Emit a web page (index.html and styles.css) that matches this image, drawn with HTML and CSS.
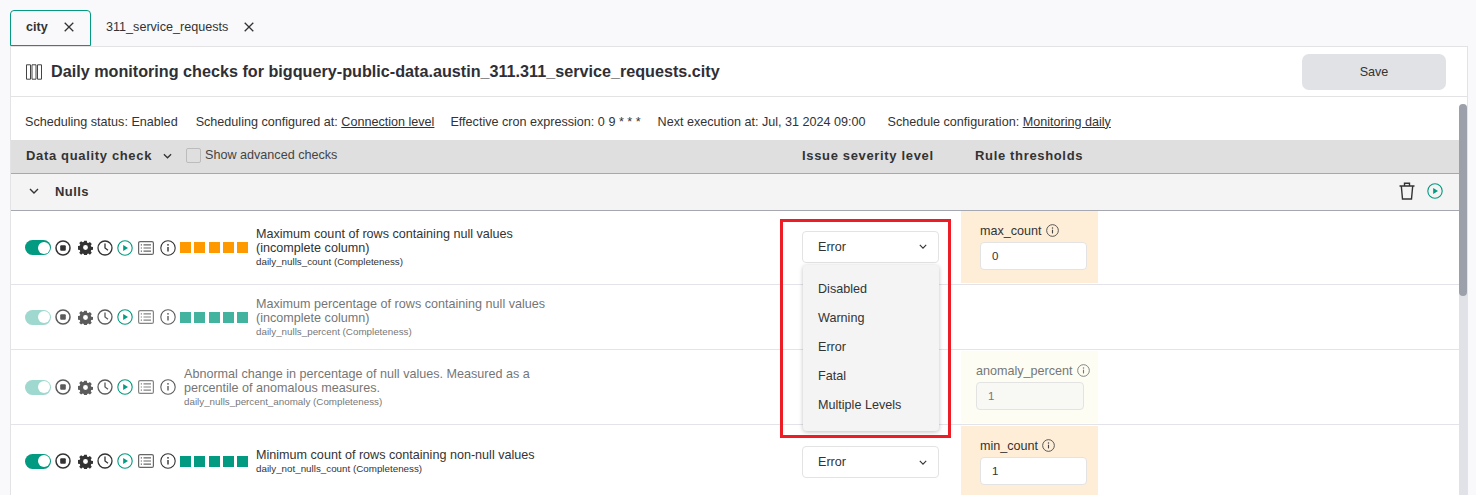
FILE: index.html
```html
<!DOCTYPE html>
<html lang="en">
<head>
<meta charset="utf-8">
<title>Daily monitoring checks</title>
<link rel="stylesheet" href="styles.css">
</head>
<body>
<svg class="defs" width="0" height="0" aria-hidden="true">
  <symbol id="stop" viewBox="0 0 16 16"><circle cx="8" cy="8" r="7" fill="none" stroke="currentColor" stroke-width="1.5"/><rect x="5.2" y="5.2" width="5.6" height="5.6" rx="1" fill="currentColor"/></symbol>
  <symbol id="gear" viewBox="0 0 16 16"><path fill="currentColor" fill-rule="evenodd" d="M6.6.8h2.8l.4 2 1.2.5 1.7-1.1 2 2-1.1 1.7.5 1.2 2 .4v2.8l-2 .4-.5 1.2 1.1 1.7-2 2-1.7-1.1-1.2.5-.4 2H6.6l-.4-2-1.2-.5-1.7 1.1-2-2 1.1-1.7-.5-1.2-2-.4V6.5l2-.4.5-1.2-1.100-1.700 2-2L5 2.300l1.200-.5zM8 5.400a2.600 2.600 0 1 0 0 5.200 2.600 2.600 0 0 0 0-5.200z"/></symbol>
  <symbol id="clock" viewBox="0 0 16 16"><circle cx="8" cy="8" r="7" fill="none" stroke="currentColor" stroke-width="1.300"/><path d="M8 3.600V8l3 2.200" fill="none" stroke="currentColor" stroke-width="1.300"/></symbol>
  <symbol id="play" viewBox="0 0 16 16"><circle cx="8" cy="8" r="7.200" fill="none" stroke="#029a80" stroke-width="1.100"/><path d="M6.200 4.900v6.200L11 8z" fill="#029a80"/></symbol>
  <symbol id="list" viewBox="0 0 16 16"><rect x=".6" y="1.600" width="14.800" height="12.800" rx="1.500" fill="none" stroke="currentColor" stroke-width="1.200"/><path d="M5.500 4.800h7.500M5.500 8h7.500M5.500 11.200h7.500M2.800 4.800h1.200M2.800 8h1.200M2.800 11.200h1.200" stroke="currentColor" stroke-width="1.200"/></symbol>
  <symbol id="info" viewBox="0 0 16 16"><circle cx="8" cy="8" r="7.200" fill="none" stroke="currentColor" stroke-width="1.100"/><path d="M8 7v4.600" stroke="currentColor" stroke-width="1.400"/><circle cx="8" cy="4.800" r=".9" fill="currentColor"/></symbol>
  <symbol id="chev" viewBox="0 0 10 6"><path d="M1 1l4 4 4-4" fill="none" stroke="currentColor" stroke-width="1.400"/></symbol>
  <symbol id="close" viewBox="0 0 10 10"><path d="M.7.7l8.600 8.600M9.300.7L.7 9.300" fill="none" stroke="currentColor" stroke-width="1.300"/></symbol>
  <symbol id="trash" viewBox="0 0 16 18"><path d="M.5 4h15M5.500 4V1.200h5V4M2.300 4l1.200 13h9l1.200-13" fill="none" stroke="currentColor" stroke-width="1.400"/></symbol>
  <symbol id="cols" viewBox="0 0 16 16"><path d="M.5.800h4v14.400h-4zM6 .8h4v14.400H6zM11.500.8h4v14.400h-4z" fill="none" stroke="currentColor" stroke-width="1"/></symbol>
</svg>

<div class="tabs">
  <div class="tab active"><span class="tab-label">city</span><svg class="x"><use href="#close"/></svg></div>
  <div class="tab"><span>311_service_requests</span><svg class="x"><use href="#close"/></svg></div>
</div>

<main class="panel">
  <header class="titlebar">
    <div class="title"><svg class="cols"><use href="#cols"/></svg><h1>Daily monitoring checks for bigquery-public-data.austin_311.311_service_requests.city</h1></div>
    <button class="save">Save</button>
  </header>

  <section class="status">
    <span>Scheduling status: Enabled</span>
    <span>Scheduling configured at: <u>Connection level</u></span>
    <span>Effective cron expression: 0 9 * * *</span>
    <span>Next execution at: Jul, 31 2024 09:00</span>
    <span class="status-last">Schedule configuration: <u>Monitoring daily</u></span>
  </section>

  <div class="thead">
    <div class="col-check"><b>Data quality check</b><svg class="chev head-chev"><use href="#chev"/></svg><span class="checkbox"></span><span class="adv">Show advanced checks</span></div>
    <div class="col-sev"><b>Issue severity level</b></div>
    <div class="col-thr"><b>Rule thresholds</b></div>
  </div>

  <div class="group">
    <svg class="chev group-chev"><use href="#chev"/></svg><b>Nulls</b>
    <span class="group-actions"><svg class="trash"><use href="#trash"/></svg><svg class="ic group-play"><use href="#play"/></svg></span>
  </div>

  <div class="row r1">
    <div class="col-check">
      <div class="icons"><span class="toggle"></span><svg class="ic"><use href="#stop"/></svg><svg class="ic gear"><use href="#gear"/></svg><svg class="ic"><use href="#clock"/></svg><svg class="ic"><use href="#play"/></svg><svg class="ic lst"><use href="#list"/></svg><svg class="ic inf"><use href="#info"/></svg></div>
      <div class="squares orange"><i></i><i></i><i></i><i></i><i></i></div>
      <div class="desc"><p>Maximum count of rows containing null values<br>(incomplete column)</p><small>daily_nulls_count (Completeness)</small></div>
    </div>
    <div class="col-sev"><div class="select"><span>Error</span><svg class="chev"><use href="#chev"/></svg></div></div>
    <div class="col-thr"><div class="thr"><label>max_count <svg class="ic-s"><use href="#info"/></svg></label><div class="input">0</div></div></div>
  </div>

  <div class="row r2 off">
    <div class="col-check">
      <div class="icons"><span class="toggle"></span><svg class="ic"><use href="#stop"/></svg><svg class="ic gear"><use href="#gear"/></svg><svg class="ic"><use href="#clock"/></svg><svg class="ic"><use href="#play"/></svg><svg class="ic lst"><use href="#list"/></svg><svg class="ic inf"><use href="#info"/></svg></div>
      <div class="squares"><i></i><i></i><i></i><i></i><i></i></div>
      <div class="desc"><p>Maximum percentage of rows containing null values<br>(incomplete column)</p><small>daily_nulls_percent (Completeness)</small></div>
    </div>
    <div class="col-sev"></div>
    <div class="col-thr"></div>
  </div>

  <div class="row r3 off">
    <div class="col-check">
      <div class="icons"><span class="toggle"></span><svg class="ic"><use href="#stop"/></svg><svg class="ic gear"><use href="#gear"/></svg><svg class="ic"><use href="#clock"/></svg><svg class="ic"><use href="#play"/></svg><svg class="ic lst"><use href="#list"/></svg><svg class="ic inf"><use href="#info"/></svg></div>
      <div class="desc"><p>Abnormal change in percentage of null values. Measured as a<br>percentile of anomalous measures.</p><small>daily_nulls_percent_anomaly (Completeness)</small></div>
    </div>
    <div class="col-sev"></div>
    <div class="col-thr"><div class="thr thr-off"><label>anomaly_percent <svg class="ic-s"><use href="#info"/></svg></label><div class="input">1</div></div></div>
  </div>

  <div class="row r4">
    <div class="col-check">
      <div class="icons"><span class="toggle"></span><svg class="ic"><use href="#stop"/></svg><svg class="ic gear"><use href="#gear"/></svg><svg class="ic"><use href="#clock"/></svg><svg class="ic"><use href="#play"/></svg><svg class="ic lst"><use href="#list"/></svg><svg class="ic inf"><use href="#info"/></svg></div>
      <div class="squares"><i></i><i></i><i></i><i></i><i></i></div>
      <div class="desc"><p>Minimum count of rows containing non-null values</p><small>daily_not_nulls_count (Completeness)</small></div>
    </div>
    <div class="col-sev"><div class="select"><span>Error</span><svg class="chev"><use href="#chev"/></svg></div></div>
    <div class="col-thr"><div class="thr"><label>min_count <svg class="ic-s"><use href="#info"/></svg></label><div class="input">1</div></div></div>
  </div>

  <div class="scrollbar"></div>
</main>

<ul class="menu">
  <li>Disabled</li><li>Warning</li><li>Error</li><li>Fatal</li><li>Multiple Levels</li>
</ul>
<div class="redbox"></div>
</body>
</html>
```
FILE: styles.css
```css
* { box-sizing: border-box; }
html, body { height: 100%; }
body {
  margin: 0;
  padding: 10px 8px 0 10px;
  height: 495px;
  overflow: hidden;
  position: relative;
  background: #f9f9fb;
  font-family: "Liberation Sans", Arial, sans-serif;
  font-size: 12.6px;
  color: #333;
}
.defs { position: absolute; }
b { font-weight: 700; }

.tabs { display: flex; height: 36px; }
.tab {
  display: flex;
  align-items: center;
  height: 36px;
  padding: 0 15px 2px 15px;
  gap: 16px;
  color: #333;
}
.tab.active {
  width: 81px;
  border: 1px solid #029a80;
  border-radius: 4px 4px 0 0;
  font-weight: 700;
  gap: 16px;
}
.x { width: 10px; height: 10px; color: #333; }

.panel {
  position: relative;
  height: 449px;
  background: #fff;
  border: 1px solid #e3e3e6;
  border-bottom: 0;
  overflow: hidden;
}

.titlebar {
  display: flex;
  align-items: center;
  justify-content: space-between;
  height: 50px;
  padding: 0 21px 0 15px;
  border-bottom: 1px solid #e3e3e6;
}
.title { display: flex; align-items: center; gap: 9px; }
.cols { width: 16px; height: 16px; color: #444; }
h1 { margin: 0; font-size: 16.18px; font-weight: 700; color: #2f2f35; }
.save {
  width: 144px;
  height: 36px;
  border: 0;
  border-radius: 7px;
  background: #e0e2e6;
  font: 12.6px "Liberation Sans", Arial, sans-serif;
  color: #333;
}

.status {
  display: flex;
  align-items: center;
  height: 43px;
  padding: 6px 0 0 14px;
  gap: 17px;
  color: #333;
  white-space: nowrap;
}
.status span:nth-child(2) { margin-left: 1px; }
.status span:nth-child(3) { margin-left: -1px; }
.status-last { margin-left: 5px; }

.col-check { width: 791px; flex: none; display: flex; align-items: center; padding-left: 14px; }
.col-sev { width: 159px; flex: none; }
.col-thr { flex: 1; }

.thead {
  display: flex;
  align-items: center;
  height: 34px;
  margin-right: 8px;
  padding-bottom: 2px;
  background: #dfdfdf;
  border-bottom: 1px solid #a5a8b0;
}
.thead .col-check { padding-left: 15px; }
.thead .col-sev { width: 173px; }
.thead b { font-size: 13px; letter-spacing: .66px; color: #333; }
.chev { width: 9px; height: 6px; color: #333; }
.head-chev { margin: 0 0 0 11px; }
.checkbox {
  width: 15px;
  height: 15px;
  margin-left: 14px;
  border: 1px solid #bcbcbc;
  border-radius: 2px;
}
.adv { margin-left: 4px; color: #444; position: relative; bottom: 1px; }

.group {
  position: relative;
  display: flex;
  align-items: center;
  height: 37px;
  margin-right: 8px;
  padding: 0 0 2px 18px;
  background: #f4f4f4;
  border-bottom: 1px solid #a5a8b0;
}
.group b { margin-left: 16px; font-size: 13px; letter-spacing: .4px; }
.group-chev { width: 10px; }
.group-actions {
  margin-left: auto;
  margin-right: 12px;
  display: flex;
  align-items: center;
  gap: 12px;
}
.trash { width: 16px; height: 18px; color: #333; }
.group-play { width: 19px; height: 19px; margin-right: 0; }

.row {
  display: flex;
  align-items: center;
  margin-right: 8px;
  border-bottom: 1px solid #e3e3ea;
}
.r1 { height: 74px; }
.r2 { height: 65px; }
.r3 { height: 75px; }
.r4 { height: 72px; border-bottom: 0; }

.icons { display: flex; align-items: center; width: 155px; flex: none; color: #333; }
.toggle {
  position: relative;
  width: 26px;
  height: 15px;
  border-radius: 8px;
  background: #029a80;
  margin-right: 4px;
  flex: none;
}
.toggle::after {
  content: "";
  position: absolute;
  right: 1px;
  top: 1.5px;
  width: 12px;
  height: 12px;
  border-radius: 50%;
  background: #fff;
}
.ic { width: 16px; height: 16px; margin-right: 4px; flex: none; }
.ic.gear { margin-left: 3px; width: 15px; height: 15px; margin-right: 4px; }
.ic.lst { color: #666; margin-left: 1px; margin-right: 6px; }
.ic.inf { margin-right: 4px; }
.r2 .icons, .r3 .icons { width: 151px; margin-right: 4px; }

.squares { display: flex; gap: 3.3px; width: 76px; flex: none; }
.squares i { width: 11px; height: 11px; background: #029a80; display: block; }
.squares.orange i { background: #ff9900; }

.desc { color: #333; line-height: 14px; }
.desc p { margin: 0; }
.desc small { display: block; font-size: 9.8px; line-height: 14px; color: #333; }
.r2 .desc, .r3 .desc, .r4 .desc { padding-top: 2px; }
.r3 .desc { margin-left: 4px; }
.off .toggle { opacity: .38; }
.off .icons .ic { opacity: .8; }
.off .icons .ic:nth-child(5) { opacity: 1; }
.off .squares { opacity: .75; }
.off .desc { opacity: .68; }

.select {
  display: flex;
  align-items: center;
  justify-content: space-between;
  width: 137px;
  height: 32px;
  padding: 0 11px 0 15px;
  border: 1px solid #e3e3e3;
  border-radius: 4px;
  background: #fff;
}
.r1 .select { margin-bottom: 2px; }
.r4 .select { margin-top: 2px; }
.select .chev { width: 8px; height: 5px; }

.row .col-thr { align-self: flex-start; }
.thr {
  width: 137px;
  height: 72px;
  padding: 12px 11px 0 19px;
  background: #feeed8;
}
.r3 .thr { height: 72px; margin-top: 1px; }
.r4 .thr { margin-top: 1px; height: 80px; }
.thr label { display: flex; align-items: center; gap: 4px; height: 15px; white-space: nowrap; color: #333; }
.ic-s { width: 13px; height: 13px; color: #444; flex: none; }
.input {
  width: 107px;
  height: 28px;
  margin-top: 4px;
  padding-left: 11px;
  display: flex;
  align-items: center;
  border: 1px solid #e3e3e3;
  border-radius: 4px;
  background: #fff;
  font-size: 11.5px;
}
.thr-off { background: #fdfdf3; padding-left: 15px; color: #777; }
.thr-off label { color: #777; }
.thr-off .ic-s { color: #777; }
.thr-off .input { width: 108px; background: #f8f8f5; color: #777; }

.scrollbar {
  position: absolute;
  top: 57px;
  bottom: 0;
  right: 0;
  width: 8px;
  background: #e0e2e8;
  border-radius: 4px 4px 0 0;
}
.scrollbar::before {
  content: "";
  display: block;
  height: 192px;
  background: #9ca0aa;
  border-radius: 4px;
}

.menu {
  position: absolute;
  left: 803px;
  top: 265px;
  width: 136px;
  height: 166px;
  margin: 0;
  padding: 10px 0 0 15px;
  list-style: none;
  background: #f4f4f4;
  border-radius: 4px;
  box-shadow: 0 1px 4px rgba(0, 0, 0, .25);
}
.menu li { height: 29px; line-height: 29px; }

.redbox {
  position: absolute;
  left: 780px;
  top: 219px;
  width: 171px;
  height: 219px;
  border: 3px solid #ee1c25;
  pointer-events: none;
}
```
